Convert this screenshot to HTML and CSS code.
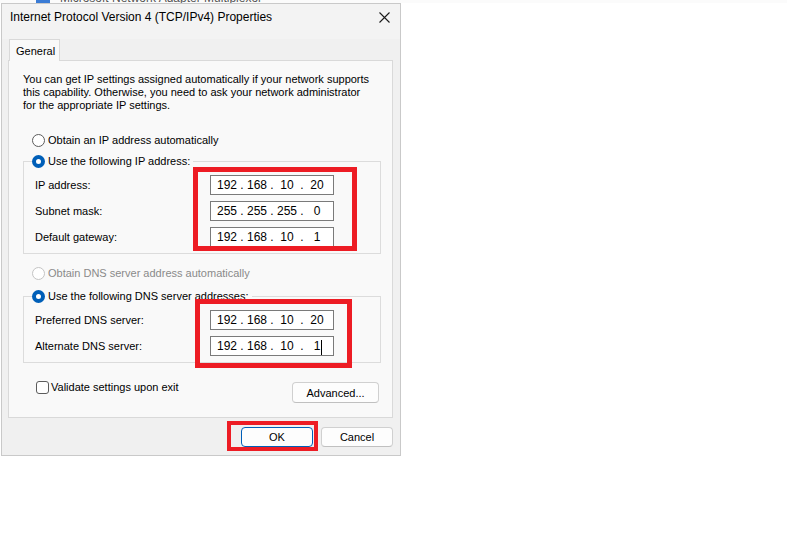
FILE: index.html
```html
<!DOCTYPE html>
<html lang="en">
<head>
  <meta charset="UTF-8" />
  <title>Internet Protocol Version 4 (TCP/IPv4) Properties</title>
  <link rel="stylesheet" href="styles.css">
</head>
<body>

  <!-- janela de tras, quase toda escondida -->
  <div class="behind">
    <div class="behind-line">
      <span class="behind-icon"></span>
      <span>Microsoft Network Adapter Multiplexor</span>
    </div>
  </div>

  <div class="dialog">
    <div class="titlebar">
      <span>Internet Protocol Version 4 (TCP/IPv4) Properties</span>
      <svg class="close" width="11" height="11" viewBox="0 0 11 11">
        <path d="M0.5 0.5 L10.5 10.5 M10.5 0.5 L0.5 10.5" stroke="#1a1a1a" stroke-width="1.1" fill="none"/>
      </svg>
    </div>

    <div class="tabs">
      <div class="tab">General</div>
    </div>

    <div class="panel">
      <p class="intro">You can get IP settings assigned automatically if your network supports<br>this capability. Otherwise, you need to ask your network administrator<br>for the appropriate IP settings.</p>

      <label class="radio first"><span class="dot"></span>Obtain an IP address automatically</label>

      <div class="group">
        <label class="radio legend"><span class="dot on"></span>Use the following IP address:</label>
        <div class="fields">
          <span>IP address:</span>
          <div class="ip"><span>192</span><i>.</i><span>168</span><i>.</i><span>10</span><i>.</i><span>20</span></div>
          <span>Subnet mask:</span>
          <div class="ip"><span>255</span><i>.</i><span>255</span><i>.</i><span>255</span><i>.</i><span>0</span></div>
          <span>Default gateway:</span>
          <div class="ip"><span>192</span><i>.</i><span>168</span><i>.</i><span>10</span><i>.</i><span>1</span></div>
        </div>
      </div>

      <label class="radio disabled"><span class="dot"></span>Obtain DNS server address automatically</label>

      <div class="group">
        <label class="radio legend"><span class="dot on"></span>Use the following DNS server addresses:</label>
        <div class="fields">
          <span>Preferred DNS server:</span>
          <div class="ip"><span>192</span><i>.</i><span>168</span><i>.</i><span>10</span><i>.</i><span>20</span></div>
          <span>Alternate DNS server:</span>
          <div class="ip"><span>192</span><i>.</i><span>168</span><i>.</i><span>10</span><i>.</i><span class="caret">1</span></div>
        </div>
      </div>

      <div class="bottom-row">
        <label class="check"><span class="box"></span>Validate settings upon exit</label>
        <button class="btn advanced">Advanced...</button>
      </div>
    </div>

    <div class="footer">
      <button class="btn default">OK</button>
      <button class="btn">Cancel</button>
    </div>

    <!-- marcacoes vermelhas -->
    <div class="mark mark-ip"></div>
    <div class="mark mark-dns"></div>
    <div class="mark mark-ok"></div>
  </div>

</body>
</html>
```

FILE: styles.css
```css
body {
  margin: 0;
  background: #ffffff;
  font-family: "Liberation Sans", Arial, sans-serif;
  font-size: 11px;
  color: #000;
}

.behind {
  height: 3px;
  overflow: hidden;
  background: #fbfbfb;
}

.behind-line {
  display: flex;
  align-items: center;
  gap: 10px;
  margin-top: -9px;
  padding-left: 36px;
  height: 14px;
  color: #555;
  font-size: 12px;
}

.behind-icon {
  width: 14px;
  height: 12px;
  background: #3a7bd5;
}

.dialog {
  position: relative;
  box-sizing: border-box;
  width: 400px;
  margin-left: 1px;
  border: 1px solid #c9c9c9;
  background: #f0f0f0;
}

.titlebar {
  display: flex;
  justify-content: space-between;
  align-items: flex-start;
  height: 35px;
  box-sizing: border-box;
  padding: 5px 10px 0 8px;
  line-height: 16px;
  font-size: 12px;
  background: #f3f3f3;
}

.close {
  margin-top: 3px;
}

.tabs {
  display: flex;
  padding-left: 7px;
  position: relative;
  z-index: 1;
}

.tab {
  box-sizing: border-box;
  width: 51px;
  height: 22px;
  margin-bottom: -1px;
  padding: 3px 0 0 6px;
  border: 1px solid #d9d9d9;
  border-bottom: none;
  background: #f9f9f9;
  line-height: 16px;
}

.panel {
  margin: 0 7px 0 6px;
  border: 1px solid #d9d9d9;
  background: #f9f9f9;
  padding: 12px 0 14px 0;
}

.intro {
  margin: 0;
  padding: 0 0 0 14px;
  line-height: 13px;
  white-space: nowrap;
}

.radio {
  display: flex;
  align-items: center;
  gap: 3px;
  height: 16px;
  line-height: 16px;
}

.radio.first {
  margin: 20px 0 0 23px;
}

.radio.disabled {
  margin: 11px 0 0 23px;
  color: #8a8a8a;
}

.radio.disabled .dot {
  border-color: #c4c4c4;
}

.dot {
  box-sizing: border-box;
  width: 13px;
  height: 13px;
  border: 1px solid #5c5c5c;
  border-radius: 50%;
  background: #fff;
}

.dot.on {
  border: 4px solid #005fb8;
  background: #fff;
}

.group {
  margin: 13px 11px 0 14px;
  border: 1px solid #dcdcdc;
  padding: 0 0 6px 0;
}

.radio.disabled + .group {
  margin-top: 15px;
}

.radio.legend {
  width: fit-content;
  margin: -9px 0 0 8px;
  padding-right: 3px;
  background: #f9f9f9;
}

.fields {
  display: grid;
  grid-template-columns: 175px 124px;
  row-gap: 6px;
  align-items: center;
  margin-top: 6px;
  padding-left: 11px;
}

.ip {
  box-sizing: border-box;
  display: flex;
  align-items: center;
  height: 20px;
  padding-left: 3px;
  border: 1px solid #7a7a7a;
  background: #fff;
  font-size: 12px;
}

.ip span {
  width: 26px;
  text-align: center;
}

.ip i {
  font-style: normal;
  width: 4px;
  text-align: center;
}

.caret {
  position: relative;
}

.caret::after {
  content: "";
  position: absolute;
  top: 1px;
  right: 8px;
  width: 1px;
  height: 15px;
  background: #000;
}

.bottom-row {
  display: flex;
  justify-content: space-between;
  align-items: flex-start;
  margin-top: 18px;
  padding: 0 13px 0 27px;
}

.check {
  display: flex;
  align-items: center;
  gap: 2px;
  height: 13px;
  line-height: 13px;
}

.box {
  box-sizing: border-box;
  width: 13px;
  height: 13px;
  border: 1px solid #5c5c5c;
  border-radius: 3px;
  background: #fff;
}

.btn {
  box-sizing: border-box;
  height: 21px;
  padding: 0;
  border: 1px solid #d0d0d0;
  border-bottom-color: #c0c0c0;
  border-radius: 4px;
  background: #fdfdfd;
  font-family: inherit;
  font-size: 11px;
  color: #000;
}

.advanced {
  width: 87px;
  margin-top: 1px;
}

.footer {
  display: flex;
  justify-content: flex-end;
  gap: 8px;
  padding: 9px 7px 8px 0;
}

.footer .btn {
  width: 72px;
  height: 20px;
}

.btn.default {
  border: 1px solid #005fb8;
}

.mark {
  position: absolute;
  border: 5px solid #ed1c24;
}

.mark-ip {
  left: 191px;
  top: 163px;
  width: 154px;
  height: 74px;
}

.mark-dns {
  left: 193px;
  top: 295px;
  width: 147px;
  height: 59px;
}

.mark-ok {
  left: 225px;
  top: 417px;
  width: 83px;
  height: 22px;
  border-width: 4px;
}
```
